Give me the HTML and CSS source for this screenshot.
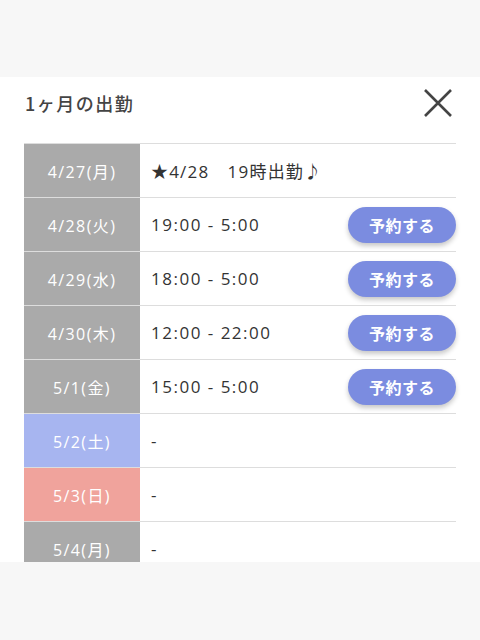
FILE: index.html
```html
<!DOCTYPE html>
<html lang="ja">
<head>
    <meta charset="UTF-8">
    <meta name="viewport" content="width=device-width, initial-scale=1.0">
    <title>1ヶ月の出勤</title>
    <link rel="stylesheet" href="styles.css">
</head>
<body>
    <div class="top-space"></div>
    <div class="panel">
        <div class="panel-header">
            <h2>1ヶ月の出勤</h2>
            <button class="close-btn" aria-label="閉じる">
                <svg width="28" height="28" viewBox="0 0 28 28">
                    <path d="M1 1 L27 27 M27 1 L1 27" stroke="#444" stroke-width="2.6" fill="none"/>
                </svg>
            </button>
        </div>

        <table class="schedule">
            <tr>
                <th>4/27(月)</th>
                <td><div class="cell"><span class="time note">★4/28　19時出勤♪</span></div></td>
            </tr>
            <tr>
                <th>4/28(火)</th>
                <td><div class="cell"><span class="time">19:00 - 5:00</span><button class="reserve">予約する</button></div></td>
            </tr>
            <tr>
                <th>4/29(水)</th>
                <td><div class="cell"><span class="time">18:00 - 5:00</span><button class="reserve">予約する</button></div></td>
            </tr>
            <tr>
                <th>4/30(木)</th>
                <td><div class="cell"><span class="time">12:00 - 22:00</span><button class="reserve">予約する</button></div></td>
            </tr>
            <tr>
                <th>5/1(金)</th>
                <td><div class="cell"><span class="time">15:00 - 5:00</span><button class="reserve">予約する</button></div></td>
            </tr>
            <tr>
                <th class="sat">5/2(土)</th>
                <td><div class="cell"><span class="time">-</span></div></td>
            </tr>
            <tr>
                <th class="sun">5/3(日)</th>
                <td><div class="cell"><span class="time">-</span></div></td>
            </tr>
            <tr>
                <th>5/4(月)</th>
                <td><div class="cell"><span class="time">-</span></div></td>
            </tr>
        </table>
    </div>
</body>
</html>
```

FILE: styles.css
```css
body {
    margin: 0;
    padding: 0;
    background-color: #f7f7f7;
    font-family: "Open Sans", "Noto Sans CJK JP", sans-serif;
    color: #333;
}
.top-space {
    height: 77px;
}
.panel {
    background-color: #fff;
    height: 485px;
    padding: 0 24px;
    overflow: hidden;
}
.panel-header {
    height: 66px;
    display: flex;
    justify-content: space-between;
    align-items: center;
}
.panel-header h2 {
    margin: 0 0 14px 1px;
    font-family: "Noto Sans CJK JP", sans-serif;
    font-size: 18px;
    font-weight: 500;
    letter-spacing: 1.5px;
    color: #444;
}
.close-btn {
    background: none;
    border: none;
    padding: 0;
    margin: 0 4px 14px 0;
    width: 28px;
    height: 28px;
    cursor: pointer;
}
.schedule {
    width: 100%;
    border-collapse: collapse;
}
.schedule tr {
    height: 54px;
    border-top: 1px solid #ddd;
    border-bottom: 1px solid #ddd;
}
.schedule th {
    width: 116px;
    padding: 0;
    background-color: #aaa;
    color: #fff;
    font-size: 16px;
    font-weight: normal;
    letter-spacing: 1.4px;
    text-align: center;
}
.schedule th.sat {
    background-color: #a7b5f0;
}
.schedule th.sun {
    background-color: #f0a39c;
}
.schedule td {
    padding: 0 0 0 11px;
}
.cell {
    display: flex;
    justify-content: space-between;
    align-items: center;
}
.cell .time {
    font-size: 17px;
    letter-spacing: 1.5px;
}
.cell .note {
    letter-spacing: 1.2px;
}
.reserve {
    width: 108px;
    height: 36px;
    border: none;
    border-radius: 18px;
    background-color: #7b8ce0;
    color: #fff;
    font-family: "Noto Sans CJK JP", sans-serif;
    font-size: 16px;
    font-weight: bold;
    letter-spacing: 0.5px;
    box-shadow: 0 3px 5px rgba(0, 0, 0, 0.22);
    cursor: pointer;
}
```
